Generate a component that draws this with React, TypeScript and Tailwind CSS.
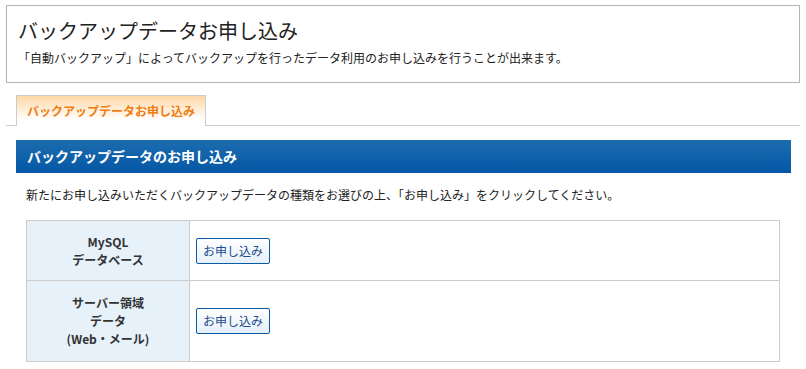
export default function App() {
  return (
    <div
      className="min-h-[369px] bg-white px-[6px] pt-[5px] text-[#333]"
      style={{ fontFamily: '"Noto Sans CJK JP", "Noto Sans", sans-serif' }}
    >
      {/* Page heading */}
      <div className="h-[78px] w-[794px] border border-[#b5b5b5] px-[11px] pt-[11px]">
        <h1 className="text-[20px] leading-[28px] text-[#222]">バックアップデータお申し込み</h1>
        <p className="mt-[4px] text-[12px] leading-[18px] text-[#222]">
          「自動バックアップ」によってバックアップを行ったデータ利用のお申し込みを行うことが出来ます。
        </p>
      </div>

      {/* Tabs */}
      <div className="mt-[12px] flex border-b border-[#cccccc] pl-[10px]">
        <div className="-mb-px flex h-[31px] w-[190px] items-center justify-center border border-b-0 border-[#cccccc] bg-gradient-to-b from-[#fdd7a4] to-white to-80% bg-white">
          <span className="text-[12px] font-bold text-[#f07c12]">バックアップデータお申し込み</span>
        </div>
      </div>

      {/* Section */}
      <div className="pl-[10px] pr-[9px] pt-[14px]">
        <div className="flex h-[33px] items-center bg-gradient-to-b from-[#1b6cae] to-[#0457a6] px-[11px]">
          <h2 className="text-[14px] font-bold text-white">バックアップデータのお申し込み</h2>
        </div>
        <p className="mt-[13px] pl-[10px] text-[12px] leading-[18px] text-[#222]">
          新たにお申し込みいただくバックアップデータの種類をお選びの上、「お申し込み」をクリックしてください。
        </p>

        <div className="ml-[10px] mr-[11px] mt-[16px] border border-[#cccccc]">
          <div className="flex h-[60px] border-b border-[#cccccc]">
            <div className="flex w-[163px] flex-col items-center justify-center border-r border-[#cccccc] bg-[#e6f1fa] text-[12px] font-bold leading-[18px] text-[#333]">
              <span>MySQL</span>
              <span>データベース</span>
            </div>
            <div className="flex items-center px-[6px]">
              <ApplyButton />
            </div>
          </div>
          <div className="flex h-[80px]">
            <div className="flex w-[163px] flex-col items-center justify-center border-r border-[#cccccc] bg-[#e6f1fa] text-[12px] font-bold leading-[18px] text-[#333]">
              <span>サーバー領域</span>
              <span>データ</span>
              <span>(Web・メール)</span>
            </div>
            <div className="flex items-center px-[6px]">
              <ApplyButton />
            </div>
          </div>
        </div>
      </div>
    </div>
  )
}

function ApplyButton() {
  return (
    <button className="h-[26px] w-[74px] rounded-[2px] border border-[#0b5aa6] bg-gradient-to-b from-white to-[#e6f0fa] text-[12px] text-[#1d4c8c]">
      お申し込み
    </button>
  )
}
